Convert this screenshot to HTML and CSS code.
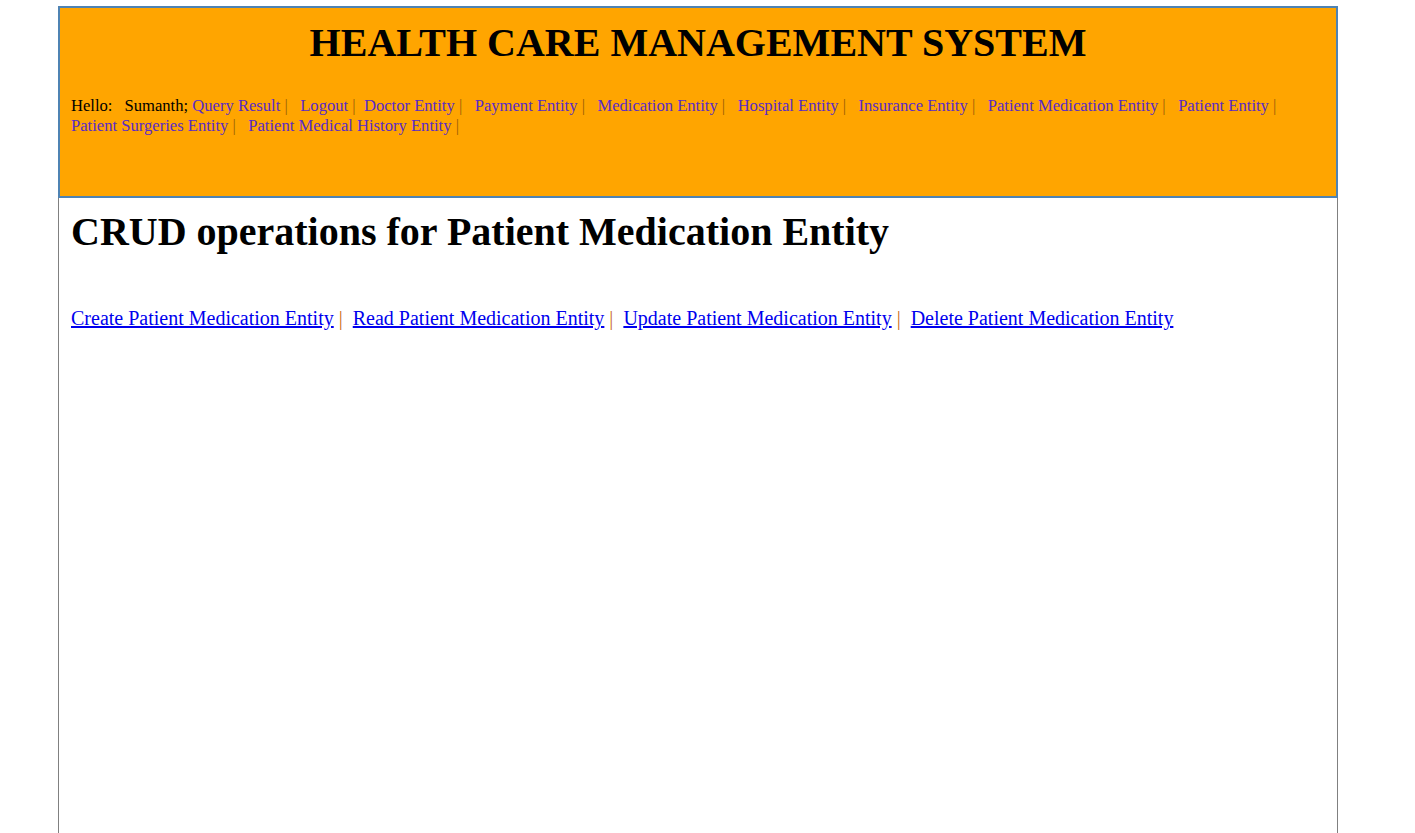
FILE: index.html
```html
<!DOCTYPE html>
<html>
<head>
<meta charset="utf-8">
<title>Health Care Management System</title>
<link rel="stylesheet" href="styles.css">
</head>
<body>
<div class="page">
  <div class="header">
    <h1 class="title">HEALTH CARE MANAGEMENT SYSTEM</h1>
    <div class="nav">
      <span class="hello">Hello:</span><span class="user">Sumanth;</span>
      <a href="#">Query Result</a> <span class="sep">|</span> &nbsp;&nbsp;<a href="#">Logout</a> <span class="sep">|</span> &nbsp;<a href="#">Doctor Entity</a> <span class="sep">|</span> &nbsp;&nbsp;<a href="#">Payment Entity</a> <span class="sep">|</span> &nbsp;&nbsp;<a href="#">Medication Entity</a> <span class="sep">|</span> &nbsp;&nbsp;<a href="#">Hospital Entity</a> <span class="sep">|</span> &nbsp;&nbsp;<a href="#">Insurance Entity</a> <span class="sep">|</span> &nbsp;&nbsp;<a href="#">Patient Medication Entity</a> <span class="sep">|</span> &nbsp;&nbsp;<a href="#">Patient Entity</a> <span class="sep">|</span>
      <a href="#">Patient Surgeries Entity</a> <span class="sep">|</span> &nbsp;&nbsp;<a href="#">Patient Medical History Entity</a> <span class="sep">|</span>
    </div>
  </div>
  <div class="content">
    <h2 class="heading">CRUD operations for Patient Medication Entity</h2>
    <div class="crud">
      <a href="#">Create Patient Medication Entity</a> <span class="sep">|</span> &nbsp;<a href="#">Read Patient Medication Entity</a> <span class="sep">|</span> &nbsp;<a href="#">Update Patient Medication Entity</a> <span class="sep">|</span> &nbsp;<a href="#">Delete Patient Medication Entity</a>
    </div>
  </div>
</div>
</body>
</html>
```
FILE: styles.css
```css
html {
  overflow: hidden;
}
body {
  margin: 0;
  font-family: "Liberation Serif", "Times New Roman", serif;
  background: #ffffff;
  color: #000000;
}
.page {
  margin: 6px 0 0 58px;
  width: 1278px;
  height: 900px;
  border: 1px solid #808080;
}
.header {
  margin: -1px -1px 0 -1px;
  height: 188px;
  background: #ffa500;
  border: 2px solid #4f83b3;
  padding: 0 11px;
}
.title {
  margin: 12px 0 0 0;
  font-size: 40px;
  line-height: 46px;
  font-weight: bold;
  text-align: center;
}
.nav {
  margin-top: 30px;
  font-size: 16.6px;
  line-height: 20px;
}
.user {
  margin-left: 12px;
}
.nav a {
  color: #5a2bc6;
  text-decoration: none;
}
.sep {
  color: #c8671a;
}
.nav .sep {
  color: #9a5f08;
}
.content {
  padding: 0 12px;
}
.heading {
  margin: 11px 0 0 0;
  font-size: 40px;
  line-height: 46px;
  font-weight: bold;
}
.crud {
  margin-top: 52px;
  font-size: 20px;
  line-height: 23px;
}
.crud a {
  color: #0000ee;
  text-decoration: underline;
}
```
